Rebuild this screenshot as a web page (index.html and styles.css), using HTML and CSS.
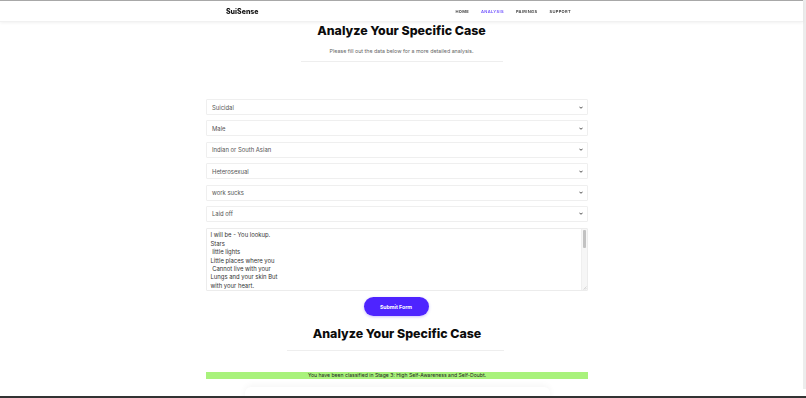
FILE: index.html
```html
<!DOCTYPE html>
<html lang="en">
<head>
<meta charset="utf-8">
<title>SuiSense - Analysis</title>
<link rel="stylesheet" href="styles.css">
</head>
<body>
<div class="page">
  <header class="nav">
    <div class="nav-inner">
      <div class="logo">SuiSense</div>
      <nav class="links">
        <a class="link">HOME</a>
        <a class="link active">ANALYSIS</a>
        <a class="link">PAIRINGS</a>
        <a class="link">SUPPORT</a>
      </nav>
    </div>
  </header>

  <main class="content">
    <section class="intro">
      <h1 class="title">Analyze Your Specific Case</h1>
      <p class="sub">Please fill out the data below for a more detailed analysis.</p>
      <hr class="rule rule-top">
    </section>

    <form class="form">
      <div class="field" role="combobox"><span class="val">Suicidal</span><svg class="chev" viewBox="0 0 10 6"><path d="M1 1l4 4 4-4" fill="none" stroke="#222" stroke-width="2"/></svg></div>
      <div class="field" role="combobox"><span class="val">Male</span><svg class="chev" viewBox="0 0 10 6"><path d="M1 1l4 4 4-4" fill="none" stroke="#222" stroke-width="2"/></svg></div>
      <div class="field" role="combobox"><span class="val">Indian or South Asian</span><svg class="chev" viewBox="0 0 10 6"><path d="M1 1l4 4 4-4" fill="none" stroke="#222" stroke-width="2"/></svg></div>
      <div class="field" role="combobox"><span class="val">Heterosexual</span><svg class="chev" viewBox="0 0 10 6"><path d="M1 1l4 4 4-4" fill="none" stroke="#222" stroke-width="2"/></svg></div>
      <div class="field" role="combobox"><span class="val">work sucks</span><svg class="chev" viewBox="0 0 10 6"><path d="M1 1l4 4 4-4" fill="none" stroke="#222" stroke-width="2"/></svg></div>
      <div class="field" role="combobox"><span class="val">Laid off</span><svg class="chev" viewBox="0 0 10 6"><path d="M1 1l4 4 4-4" fill="none" stroke="#222" stroke-width="2"/></svg></div>
      <div class="area-wrap">
        <div class="area">I will be - You lookup.
Stars
 little lights
Little places where you
 Cannot live with your
Lungs and your skin But
with your heart.</div>
        <div class="sbar"><div class="thumb"></div></div>
        <svg class="grip" viewBox="0 0 4 4"><path d="M0.5 3.5L3.5 0.5M2 3.5L3.5 2" stroke="#bbb" stroke-width="0.5"/></svg>
      </div>
      <button type="button" class="btn">Submit Form</button>
    </form>

    <section class="result">
      <h2 class="title title-2">Analyze Your Specific Case</h2>
      <hr class="rule rule-bottom">
      <div class="stage">You have been classified in Stage 3: High Self-Awareness and Self-Doubt.</div>
      <div class="card"></div>
    </section>
  </main>
</div>
<div class="track"></div>
<div class="bottom-bar"></div>
</body>
</html>
```

FILE: styles.css
```css
* { box-sizing: border-box; }
html, body { margin: 0; padding: 0; background: #fff; }
body {
  font-family: Inter, "Liberation Sans", Arial, sans-serif;
  color: #222;
  height: 398px;
  overflow: hidden;
  border-top: 1px solid #a8a8a8;
}
.page { width: 794px; }

.nav {
  width: 803px;
  height: 21px;
  background: #fff;
  box-shadow: 0 1px 3px rgba(0,0,0,0.06);
  border-bottom: 1px solid #f1f1f1;
  position: relative;
  z-index: 2;
}
.nav-inner {
  height: 100%;
  margin-left: 226px;
  margin-right: 232px;
  display: flex;
  align-items: center;
  justify-content: space-between;
}
.logo {
  font-size: 7px;
  font-weight: 800;
  color: #111;
}
.links { display: flex; gap: 12px; }
.link {
  font-size: 4.1px;
  font-weight: 600;
  letter-spacing: 0.3px;
  color: #333;
}
.link.active { color: #6b4dff; }

.content { display: flex; flex-direction: column; align-items: center; }
.intro { display: flex; flex-direction: column; align-items: center; margin-left: 9px; }
.title {
  margin: 1px 0 0 0;
  font-size: 12.4px;
  line-height: 15px;
  font-weight: 800;
  color: #0c0c0c;
}
.sub {
  margin: 10px 0 0 0;
  font-size: 5.3px;
  line-height: 6px;
  color: #666;
}
.rule { border: 0; border-top: 1px solid #eeeeee; margin: 0; }
.rule-top { width: 202px; margin-top: 7px; }

.form {
  width: 382px;
  margin-top: 37px;
  display: flex;
  flex-direction: column;
  align-items: center;
  gap: 5.4px;
}
.field {
  position: relative;
  width: 100%;
  height: 16px;
  border: 1px solid #efefef;
  border-radius: 1px;
  background: #fff;
  display: flex;
  align-items: center;
  justify-content: space-between;
  padding: 0 4px 0 5px;
}
.val { font-size: 5.9px; color: #555; }
.chev { width: 4px; height: 3px; }

.area-wrap {
  position: relative;
  width: 100%;
  height: 63px;
  margin-top: 0.6px;
  border: 1px solid #ececec;
  border-radius: 1px;
}
.area {
  height: 100%;
  font-size: 5.9px;
  line-height: 8.4px;
  color: #333;
  padding: 2.5px 3.5px;
  white-space: pre;
  overflow: hidden;
}
.sbar {
  position: absolute;
  top: 0;
  right: 0;
  width: 6px;
  height: 100%;
  background: #f6f6f6;
  border-left: 1px solid #efefef;
  padding: 1px 1px;
}
.thumb { width: 3px; height: 18px; border-radius: 1px; background: #c2c2c2; }
.grip { position: absolute; right: 0; bottom: 0; width: 4px; height: 4px; }

.btn {
  margin-top: 0.6px;
  margin-left: -2px;
  width: 65px;
  height: 19.5px;
  border: 0;
  border-radius: 10px;
  background: #4e24ff;
  color: #fff;
  font-family: inherit;
  font-size: 5.2px;
  font-weight: 700;
  box-shadow: 0 1px 3px rgba(78,36,255,0.3);
}

.result { display: flex; flex-direction: column; align-items: center; width: 382px; }
.title-2 { margin-top: 10px; }
.rule-bottom { width: 217px; margin-top: 9px; margin-left: -3px; }
.stage {
  width: 100%;
  margin-top: 21px;
  height: 7px;
  line-height: 7px;
  background: #a9f27c;
  text-align: center;
  font-size: 5.1px;
  color: #222;
}
.card {
  width: 305px;
  height: 30px;
  margin-top: 8px;
  border-radius: 6px;
  background: #fff;
  box-shadow: 0 -2px 6px rgba(0,0,0,0.04);
}

.track {
  position: fixed;
  top: 0;
  right: 0;
  width: 3px;
  height: 389px;
  background: #ececec;
}
.bottom-bar {
  position: fixed;
  left: 0;
  right: 0;
  bottom: 0;
  height: 2px;
  background: #333;
}
```
